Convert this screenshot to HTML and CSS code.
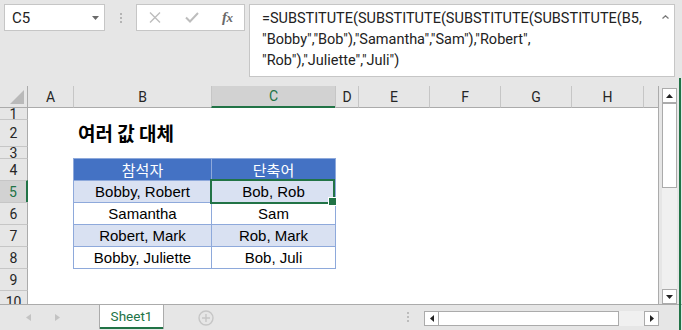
FILE: index.html
```html
<!DOCTYPE html>
<html>
<head>
<meta charset="utf-8">
<link rel="stylesheet" href="styles.css">
</head>
<body>
<div class="app">
  <div class="toolbar">
    <div class="namebox"><span>C5</span><svg class="dd" width="7" height="4" viewBox="0 0 7 4"><path d="M0 0H7L3.5 4Z" fill="#6a6a6a"/></svg></div>
    <div class="vdots"><i></i><i></i><i></i></div>
    <div class="fxbtns">
      <svg class="ic-x" width="12" height="11" viewBox="0 0 12 11"><path d="M1 0.5L11 10.5M11 0.5L1 10.5" stroke="#bdbdbd" stroke-width="1.4" fill="none"/></svg>
      <svg class="ic-ok" width="14" height="11" viewBox="0 0 14 11"><path d="M1 5.5L5 9.5L13 1" stroke="#bdbdbd" stroke-width="2" fill="none"/></svg>
      <span class="fx">f<span class="fxx">x</span></span>
    </div>
    <div class="formula">
      <div class="ftext">=SUBSTITUTE(SUBSTITUTE(SUBSTITUTE(SUBSTITUTE(B5,<br>"Bobby","Bob"),"Samantha","Sam"),"Robert",<br>"Rob"),"Juliette","Juli")</div>
      <svg class="caret" width="7" height="4" viewBox="0 0 7 4"><path d="M0.5 3.5L3.5 0.8L6.5 3.5" stroke="#7a7a7a" stroke-width="1.3" fill="none"/></svg>
    </div>
  </div>

  <div class="main">
    <div class="sheet">
      <div class="cols hrow">
        <div class="corner"><svg width="14" height="14" viewBox="0 0 14 14"><path d="M14 0V14H0Z" fill="#b9b9b9"/></svg></div>
        <div class="ch first">A</div>
        <div class="ch">B</div>
        <div class="ch sel">C</div>
        <div class="ch">D</div>
        <div class="ch">E</div>
        <div class="ch">F</div>
        <div class="ch">G</div>
        <div class="ch">H</div>
        <div class="ch"></div>
      </div>
      <div class="cols row h11"><div class="rh first">1</div></div>
      <div class="cols row h27"><div class="rh">2</div><div class="title">여러 값 대체</div></div>
      <div class="cols row h12"><div class="rh">3</div></div>
      <div class="cols row h22">
        <div class="rh">4</div>
        <div class="tc colB th">참석자</div>
        <div class="tc colC th">단축어</div>
      </div>
      <div class="cols row h22">
        <div class="rh sel">5</div>
        <div class="tc colB band">Bobby, Robert</div>
        <div class="tc colC band active">Bob, Rob</div>
      </div>
      <div class="cols row h22">
        <div class="rh">6</div>
        <div class="tc colB">Samantha</div>
        <div class="tc colC">Sam</div>
      </div>
      <div class="cols row h22">
        <div class="rh">7</div>
        <div class="tc colB band">Robert, Mark</div>
        <div class="tc colC band">Rob, Mark</div>
      </div>
      <div class="cols row h22">
        <div class="rh">8</div>
        <div class="tc colB last">Bobby, Juliette</div>
        <div class="tc colC last">Bob, Juli</div>
      </div>
      <div class="cols row h22"><div class="rh">9</div></div>
      <div class="cols row h22"><div class="rh">10</div></div>
    </div>
    <div class="vscroll">
      <div class="sbtn"><svg width="7" height="4" viewBox="0 0 7 4"><path d="M0 4L3.5 0L7 4Z" fill="#222"/></svg></div>
      <div class="vthumb"></div>
      <div class="track"></div>
      <div class="sbtn"><svg width="7" height="4" viewBox="0 0 7 4"><path d="M0 0L3.5 4L7 0Z" fill="#222"/></svg></div>
    </div>
  </div>

  <div class="tabbar">
    <div class="nav">
      <svg width="5" height="7" viewBox="0 0 5 7"><path d="M5 0V7L0 3.5Z" fill="#c3c3c3"/></svg>
      <svg class="nav-r" width="5" height="7" viewBox="0 0 5 7"><path d="M0 0V7L5 3.5Z" fill="#c3c3c3"/></svg>
    </div>
    <div class="tab">Sheet1</div>
    <svg class="plus" width="16" height="16" viewBox="0 0 16 16"><circle cx="8" cy="8" r="7" stroke="#c6c6c6" stroke-width="1.4" fill="none"/><path d="M8 4V12M4 8H12" stroke="#c6c6c6" stroke-width="1.4"/></svg>
    <div class="spacer"></div>
    <div class="hdots"><i></i><i></i><i></i></div>
    <div class="hscroll">
      <div class="hbtn"><svg width="4" height="7" viewBox="0 0 4 7"><path d="M4 0V7L0 3.5Z" fill="#222"/></svg></div>
      <div class="hthumb"></div>
      <div class="htrack"></div>
      <div class="hbtn"><svg width="4" height="7" viewBox="0 0 4 7"><path d="M0 0V7L4 3.5Z" fill="#222"/></svg></div>
    </div>
  </div>
  <div class="winedge"></div>
</div>
</body>
</html>
```

FILE: styles.css
```css
* { box-sizing: border-box; margin: 0; padding: 0; }
html, body { width: 682px; height: 330px; overflow: hidden; }
body {
  background: #e6e6e6;
  font-family: Roboto, "Noto Sans CJK KR", sans-serif;
  color: #262626;
}
.app { display: flex; flex-direction: column; height: 330px; position: relative; }

/* toolbar */
.toolbar { height: 86px; flex: none; display: flex; align-items: flex-start; padding: 4px 0 0 4px; }
.namebox {
  width: 101px; height: 27px; background: #fff; border: 1px solid #c6c6c6;
  display: flex; align-items: center; justify-content: space-between;
  padding: 0 5px 0 7px; font-size: 15px; color: #222;
}
.vdots { width: 31px; height: 27px; display: flex; flex-direction: column; align-items: center; justify-content: center; gap: 2px; }
.vdots i { display: block; width: 2px; height: 2px; background: #b4b4b4; }
.fxbtns {
  width: 109px; height: 27px; background: #fff; border: 1px solid #c6c6c6;
  display: flex; align-items: center; padding-left: 12px;
}
.ic-ok { margin-left: 24px; }
.fx { margin-left: 23px; font-family: "Liberation Serif", serif; font-style: italic; font-size: 15px; color: #6a6a6a; font-weight: bold; letter-spacing: -0.5px; }
.fxx { font-size: 13px; }
.formula {
  margin-left: 4px; width: 426px; height: 73px; background: #fff; border: 1px solid #c6c6c6;
  display: flex; align-items: flex-start;
}
.ftext {
  flex: 1; padding: 3px 0 0 12px; font-size: 14.5px; line-height: 21px; color: #222; white-space: nowrap;
}
.caret { margin: 10px 5px 0 0; }

/* sheet */
.main { height: 218px; flex: none; display: flex; }
.sheet {
  width: 659px; height: 218px; background: #fff; border-right: 1px solid #ababab;
  display: flex; flex-direction: column; overflow: hidden;
}
.cols { display: grid; grid-template-columns: 28px 45px 138px 124px 23px 71px 71px 71px 72px 15px; flex: none; }
.hrow { height: 22px; }
.corner {
  background: #e6e6e6; border-right: 1px solid #ababab; border-bottom: 1px solid #ababab;
  display: flex; align-items: flex-end; justify-content: flex-end; padding: 0 3px 3px 0;
}
.ch {
  background: #e6e6e6; border-left: 1px solid #c6c6c6; border-bottom: 1px solid #ababab;
  display: flex; align-items: center; justify-content: center; font-size: 14px;
}
.ch.first { border-left: none; }
.ch.sel { background: #d2d2d2; border-bottom: 2px solid #217346; color: #217346; }
.h11 { height: 11px; }
.h27 { height: 27px; }
.h12 { height: 12px; }
.h22 { height: 22px; }
.rh {
  grid-column: 1; background: #e6e6e6; border-right: 1px solid #ababab; border-top: 1px solid #c6c6c6;
  display: flex; align-items: center; justify-content: center; font-size: 14px; overflow: hidden;
}
.rh.first { border-top: none; }
.rh.sel { background: #d2d2d2; border-right: 2px solid #217346; color: #217346; }
.title {
  grid-column: 3 / span 3; padding-left: 5px; display: flex; align-items: center;
  font-family: "Noto Sans CJK KR", sans-serif; font-weight: bold; font-size: 19px; color: #000; white-space: nowrap;
}
.tc {
  border-left: 1px solid #8ea9db; border-top: 1px solid #8ea9db;
  display: flex; align-items: center; justify-content: center;
  font-family: "Liberation Sans", "Noto Sans CJK KR", sans-serif; font-size: 15px; color: #000; white-space: nowrap;
}
.colB { grid-column: 3; }
.colC { grid-column: 4; margin-right: -1px; border-right: 1px solid #8ea9db; }
.tc.last { margin-bottom: -1px; border-bottom: 1px solid #8ea9db; }
.th { background: #4472c4; color: #fff; }
.band { background: #d9e1f2; }
.active { position: relative; }
.active::after {
  content: ""; position: absolute; left: -2px; top: -2px; right: 0; bottom: -2px;
  border: 2px solid #217346;
}
.active::before {
  content: ""; position: absolute; right: -2px; bottom: -4px; width: 7px; height: 7px;
  background: #217346; border: 1px solid #fff; z-index: 1;
}

/* vertical scrollbar */
.vscroll {
  margin: 2px 0 0 3px; width: 15px; height: 216px; background: #f0f0f0;
  display: flex; flex-direction: column;
}
.sbtn { height: 15px; flex: none; background: #fff; border: 1px solid #ababab; display: flex; align-items: center; justify-content: center; }
.vthumb { height: 85px; flex: none; background: #fff; border: 1px solid #ababab; }
.track { flex: 1; }

/* tab bar */
.tabbar { height: 26px; flex: none; border-top: 1px solid #ababab; display: flex; }
.nav { width: 99px; display: flex; align-items: center; padding-left: 26px; }
.nav-r { margin-left: 24px; }
.tab {
  width: 65px; height: 24px; background: #fff; border-left: 1px solid #ababab; border-right: 1px solid #ababab;
  box-shadow: inset 0 -2px 0 #217346; display: flex; align-items: center; justify-content: center;
  font-size: 13.5px; color: #217346; padding-bottom: 2px;
}
.plus { margin: 5px 0 0 34px; }
.spacer { flex: 1; }
.hdots { display: flex; flex-direction: column; justify-content: center; gap: 2px; margin-right: 15px; padding-bottom: 1px; }
.hdots i { display: block; width: 2px; height: 2px; background: #bcbcbc; }
.hscroll { margin: 6px 23px 0 0; height: 15px; width: 235px; display: flex; }
.hbtn { width: 15px; background: #fff; border: 1px solid #ababab; display: flex; align-items: center; justify-content: center; }
.hthumb { width: 180px; background: #fff; border: 1px solid #ababab; border-left: none; }
.htrack { flex: 1; background: #f0f0f0; }

.winedge { position: absolute; left: 679px; top: 78px; bottom: 0; width: 2px; background: #217346; }
```
